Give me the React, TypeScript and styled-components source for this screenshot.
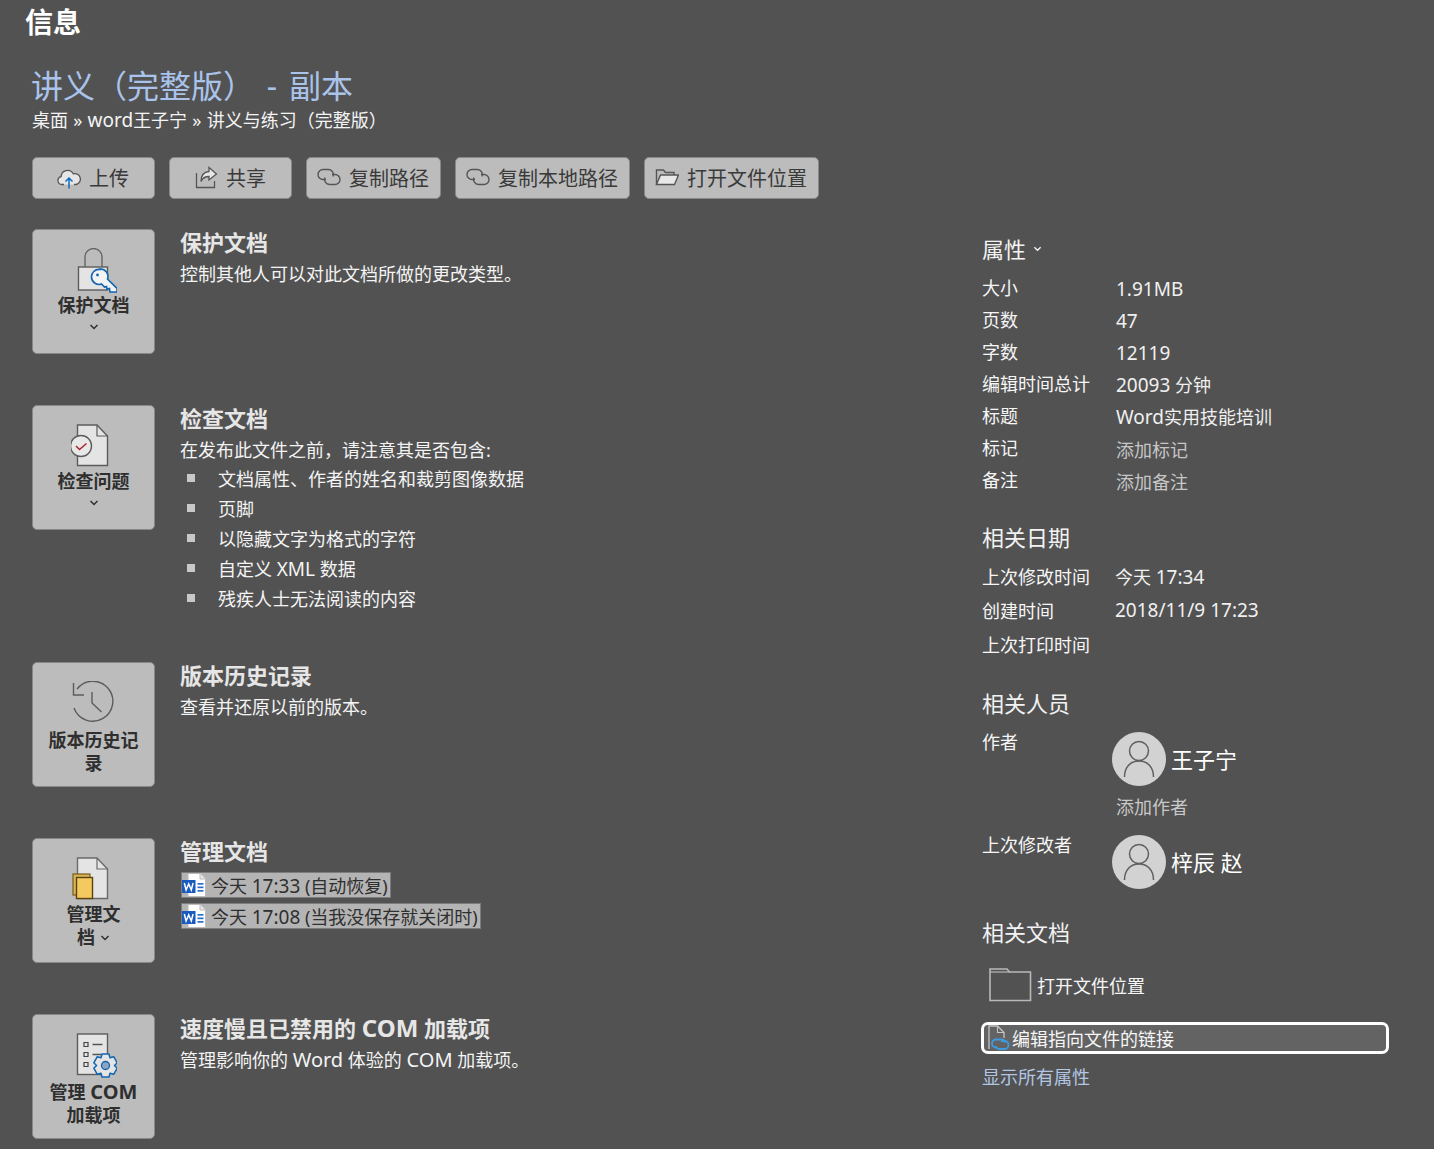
// @ts-nocheck
import React from 'react';
import styled, { createGlobalStyle } from 'styled-components';

const GlobalStyle = createGlobalStyle`
  html, body {
    margin: 0;
    padding: 0;
    background: #525252;
    font-family: "Noto Sans", "Noto Sans CJK SC", sans-serif;
  }
`;

const Page = styled.div`
  width: 1434px;
  height: 1149px;
  overflow: hidden;
  background: #525252;
  color: #fff;
`;

const PageTitle = styled.h1`
  margin: 0;
  padding: 4px 0 0 25px;
  height: 42px;
  box-sizing: border-box;
  font-size: 28px;
  line-height: 36px;
  font-weight: 700;
`;

// latin and digits run a little larger than the CJK around them
const Latin = styled.span`
  font-size: ${p => p.$size || 19}px;
`;

const FileHead = styled.div`
  padding: 22px 0 0 31px;
`;

const FileName = styled.div`
  font-size: 32px;
  line-height: 44px;
  color: #a9c3eb;
  white-space: pre;
  word-spacing: 3.5px;
`;

const Breadcrumb = styled.div`
  padding-left: 1px;
  font-size: 18px;
  line-height: 24px;
  white-space: pre;
  color: #f4f4f4;
  word-spacing: 0.5px;
`;

const Toolbar = styled.div`
  display: flex;
  gap: 14px;
  padding: 25px 0 0 32px;
`;

const ToolButton = styled.button`
  display: flex;
  align-items: center;
  gap: 8px;
  height: 42px;
  box-sizing: border-box;
  padding: 0 ${p => (p.$wide ? 25 : 11)}px 2px ${p => (p.$wide ? 24 : 10)}px;
  background: #bcbcbc;
  border: 1px solid #888;
  border-radius: 5px;
  color: #3a3a3a;
  font-family: inherit;
  font-size: 20px;
  white-space: nowrap;
`;

const Columns = styled.div`
  display: flex;
  padding: 30px 0 0 32px;
`;

const LeftColumn = styled.div`
  width: 950px;
  flex: none;
`;

const Block = styled.section`
  display: flex;
  gap: 25px;
  height: ${p => (p.$tall ? 206 : 125)}px;
  margin-bottom: 51px;
`;

const Tile = styled.div`
  width: 123px;
  height: 125px;
  flex: none;
  box-sizing: border-box;
  padding-top: 18px;
  display: flex;
  flex-direction: column;
  align-items: center;
  background: #bcbcbc;
  border: 1px solid #888;
  border-radius: 5px;
  color: #2f2f2f;
`;

const TileLabel = styled.div`
  font-size: 18px;
  line-height: 23px;
  font-weight: 700;
  text-align: center;
  width: ${p => p.$width || 96}px;
`;

const TileIcon = styled.svg`
  width: 46px;
  height: 46px;
  flex: none;
  display: block;
  margin-bottom: ${p => p.$below || 0}px;
`;

const TileChevron = styled.svg`
  display: block;
  width: 10px;
  height: 6px;
  margin-top: 7px;
`;

const InlineChevron = styled.svg`
  display: inline-block;
  width: 10px;
  height: 6px;
  margin-left: 5px;
  vertical-align: 3px;
`;

const BlockBody = styled.div`
  min-width: 0;
`;

const BlockTitle = styled.h2`
  margin: 0 0 3px;
  font-size: 22px;
  line-height: 27px;
  font-weight: 700;
  color: #e6e6e6;
`;

const BlockText = styled.p`
  margin: 0;
  font-size: 18px;
  line-height: 30px;
  color: #f4f4f4;
`;

const BulletList = styled.ul`
  list-style: none;
  margin: -2px 0 0;
  padding: 0;
`;

const BulletItem = styled.li`
  display: flex;
  align-items: center;
  height: 30px;
  font-size: 18px;
  color: #f4f4f4;
  &::before {
    content: '';
    width: 8px;
    height: 8px;
    margin: 0 23px 0 7px;
    background: #c8c8c8;
  }
`;

const Versions = styled.div`
  display: flex;
  flex-direction: column;
  align-items: flex-start;
  gap: 5px;
  padding-top: 4px;
`;

const VersionRow = styled.div`
  display: flex;
  align-items: center;
  gap: 5px;
  height: 26px;
  box-sizing: border-box;
  margin-left: 1px;
  padding-right: 2px;
  background: #b4b4b4;
  border: 1px solid #7d7d7d;
  color: #2f2f2f;
  font-size: 18px;
  white-space: pre;
`;

const RightColumn = styled.aside`
  width: 420px;
  flex: none;
`;

const SideHeading = styled.h3`
  display: flex;
  align-items: center;
  gap: 7px;
  margin: ${p => p.$top}px 0 0;
  height: 32px;
  font-size: 22px;
  line-height: 32px;
  font-weight: 400;
  color: #f2f2f2;
`;

const PropGrid = styled.dl`
  display: grid;
  grid-template-columns: ${p => p.$col}px 1fr;
  grid-auto-rows: ${p => p.$row}px;
  margin: ${p => p.$top}px 0 0;
  font-size: 18px;
  align-items: center;
`;

const PropLabel = styled.dt`
  color: #f6f6f6;
  white-space: nowrap;
`;

const PropValue = styled.dd`
  margin: ${p => p.$drop || 0}px 0 0;
  color: ${p => (p.$muted ? '#c6c6c6' : '#f0f0f0')};
  white-space: nowrap;
`;

const PersonRow = styled.div`
  display: flex;
  margin-top: ${p => p.$top}px;
`;

const PersonLabel = styled.div`
  width: 130px;
  flex: none;
  font-size: 18px;
  line-height: 20px;
  color: #f6f6f6;
`;

const Avatar = styled.div`
  width: 54px;
  height: 54px;
  border-radius: 50%;
  background: #d2d2d2;
  display: flex;
  align-items: center;
  justify-content: center;
  margin-right: 5px;
  flex: none;
`;

const PersonName = styled.div`
  font-size: 22px;
  line-height: 54px;
  color: #fff;
`;

const AddAuthor = styled.div`
  margin: 8px 0 0 134px;
  font-size: 18px;
  line-height: 26px;
  color: #c8c8c8;
`;

const FolderLink = styled.div`
  display: flex;
  align-items: center;
  gap: 5px;
  margin: 19px 0 0 7px;
  font-size: 18px;
  color: #f6f6f6;
`;

const FocusLink = styled.div`
  display: flex;
  align-items: center;
  gap: 2px;
  width: 408px;
  height: 32px;
  box-sizing: border-box;
  margin: 20px 0 0 -1px;
  padding-left: 4px;
  background: #636363;
  border: 3px solid #fff;
  border-radius: 7px;
  font-size: 18px;
  color: #f6f6f6;
`;

const ShowAll = styled.div`
  margin-top: 10px;
  font-size: 18px;
  line-height: 26px;
  color: #b3c6e4;
`;

const Cloud = () => (
  <svg width="24" height="24" viewBox="0 0 24 24" fill="none">
    <path d="M7 19.500H5a4 4 0 0 1-.9-7.900 6.500 6.500 0 0 1 12.200-2.800 5.200 5.200 0 0 1 3 10.700H17" fill="#e6e6e6" stroke="#555" strokeWidth="1.300" />
    <path d="M12 23.500V13M8.500 16.500 12 13l3.500 3.500" stroke="#0f6cbd" strokeWidth="1.500" />
  </svg>
);

const Share = () => (
  <svg width="24" height="24" viewBox="0 0 24 24" fill="none">
    <path d="M2.500 8v14.500h18V16" stroke="#555" strokeWidth="1.300" />
    <path d="M15 2.500 22.500 9 15 15v-3.500c-4 0-6.500 1.500-8 5 0-6 3-9.500 8-10z" fill="#e6e6e6" stroke="#555" strokeWidth="1.300" />
  </svg>
);

const LinkLoops = () => (
  <svg width="24" height="24" viewBox="0 0 24 24" fill="none">
    <path d="M9 14.500H6a5 5 0 0 1 0-10h5.500a5 5 0 0 1 4.500 7" stroke="#555" strokeWidth="1.400" />
    <path d="M15 9.500h3a5 5 0 0 1 0 10h-5.500a5 5 0 0 1-4.500-7" stroke="#555" strokeWidth="1.400" />
  </svg>
);

const OpenFolder = () => (
  <svg width="24" height="24" viewBox="0 0 24 24" fill="none">
    <path d="M1.500 19.500V5h7l2 2.500h8.500V10" stroke="#555" strokeWidth="1.400" fill="#bcbcbc" />
    <path d="M1.500 19.500 5.500 10h18l-4 9.500z" fill="#e8e8e8" stroke="#555" strokeWidth="1.400" />
  </svg>
);

const Chevron = ({ as: Comp = TileChevron }) => (
  <Comp viewBox="0 0 10 6" fill="none">
    <path d="M1.500 1 5 4.500 8.500 1" stroke="#2f2f2f" strokeWidth="1.500" />
  </Comp>
);

const LockIcon = () => (
  <TileIcon viewBox="0 0 46 46" fill="none">
    <path d="M14 19V9a8.500 8.500 0 0 1 17 0v10" stroke="#666" strokeWidth="1.400" />
    <rect x="7.500" y="19" width="29" height="23" fill="#e4e4e4" stroke="#5c5c5c" strokeWidth="1.400" />
    <path d="M29 21.500a7.500 7.500 0 1 0 1.500 14.500l3 3 2-.5.500 2.500 2.500-.5.500 3.500h7v-3.500l-9.500-9.500a7.500 7.500 0 0 0-7.500-10z" fill="#f3f3f3" stroke="#1265b0" strokeWidth="1.600" />
    <circle cx="26.500" cy="27" r="1.400" fill="#1265b0" />
  </TileIcon>
);

const CheckIcon = () => (
  <TileIcon viewBox="0 0 46 46" fill="none">
    <path d="M6.500 1H26l10.500 11v29.500h-30z" fill="#e4e4e4" stroke="#5c5c5c" strokeWidth="1.400" />
    <path d="M26 1v11h10.500" stroke="#5c5c5c" strokeWidth="1.200" />
    <circle cx="10" cy="22" r="10.500" fill="#e8e8e8" stroke="#5c5c5c" strokeWidth="1.400" />
    <path d="M5 22l3.500 3.500 7-6" stroke="#a8262e" strokeWidth="1.500" />
  </TileIcon>
);

const HistoryIcon = () => (
  <TileIcon viewBox="0 0 46 46" fill="none" $below={2}>
    <path d="M6 8A20 20 0 1 1 3 27" stroke="#5c5c5c" strokeWidth="1.400" />
    <path d="M2.500 2v12H13M21 11v11l9.500 9" stroke="#5c5c5c" strokeWidth="1.400" />
  </TileIcon>
);

const ManageIcon = () => (
  <TileIcon viewBox="0 0 46 46" fill="none">
    <path d="M6.500 1H26l10.500 11v29.500h-30z" fill="#e4e4e4" stroke="#6a6a6a" strokeWidth="1.400" />
    <path d="M26 1v11h10.500" stroke="#6a6a6a" strokeWidth="1.200" />
    <rect x="2" y="17" width="17" height="21" fill="#d8b45a" stroke="#7a5c16" strokeWidth="1.200" />
    <rect x="5.500" y="20.500" width="16" height="21" fill="#f4c95f" stroke="#5c4410" strokeWidth="1.400" />
  </TileIcon>
);

// gear outline, six teeth, used on the COM tile
const gearPath = (cx, cy, outer, inner) => {
  const pts = [];
  for (let i = 0; i < 6; i++) {
    const a = (i * Math.PI) / 3 - Math.PI / 2;
    [[-0.52, inner], [-0.3, outer], [0.3, outer], [0.52, inner]].forEach(([d, r]) => {
      pts.push(`${(cx + Math.cos(a + d) * r).toFixed(1)} ${(cy + Math.sin(a + d) * r).toFixed(1)}`);
    });
  }
  return `M${pts.join('L')}z`;
};

const ComIcon = () => (
  <TileIcon viewBox="0 0 46 46" fill="none" $below={1}>
    <rect x="6.500" y="1" width="30" height="40.500" fill="#e4e4e4" stroke="#5c5c5c" strokeWidth="1.400" />
    <path d="M13 9.500h4v4h-4zM13 19.500h4v4h-4zM13 29.500h4v4h-4z" stroke="#444" strokeWidth="1.200" />
    <path d="M21.500 11.500h10M21.500 21.500h9" stroke="#555" strokeWidth="1.300" />
    <path d={gearPath(34.5, 32.5, 12, 9)} fill="#e4e4e4" stroke="#1265b0" strokeWidth="1.500" strokeLinejoin="round" />
    <circle cx="34.500" cy="32.500" r="4" fill="#8aa6c2" stroke="#1265b0" strokeWidth="1.300" />
  </TileIcon>
);

const WordDoc = () => (
  <svg width="24" height="24" viewBox="0 0 24 24">
    <path d="M6 .5h12l5.500 5.500v17.500H6z" fill="#fff" stroke="#bdbdbd" strokeWidth="1" />
    <path d="M18 .5V6h5.500" fill="#e6e6e6" stroke="#bdbdbd" strokeWidth="1" />
    <rect x="15.500" y="10" width="6" height="1.700" fill="#2b6fc9" />
    <rect x="15.500" y="13.500" width="6" height="1.700" fill="#2b6fc9" />
    <rect x="15.500" y="17" width="6" height="1.700" fill="#2b6fc9" />
    <rect x="0" y="7" width="13.500" height="13" fill="#185abd" />
    <path d="M2.300 10l1.800 7 2.600-6 2.600 6 1.800-7" fill="none" stroke="#fff" strokeWidth="1.500" />
  </svg>
);

const PersonGlyph = () => (
  <svg width="32" height="44" viewBox="0 0 32 44" fill="none">
    <circle cx="16" cy="14" r="9.500" stroke="#5f5f5f" strokeWidth="1.500" />
    <path d="M1.500 40c0-10 6-16 14.500-16s14.500 6 14.500 16" stroke="#5f5f5f" strokeWidth="1.500" />
  </svg>
);

const BigFolder = () => (
  <svg width="43" height="35" viewBox="0 -2 43 35" fill="none">
    <path d="M1 31.500V0h17l2.500 3H41.500v28.500z" stroke="#b9b9b9" strokeWidth="1.600" />
    <path d="M1 3h19.500" stroke="#b9b9b9" strokeWidth="1.200" />
  </svg>
);

const LinkDoc = () => (
  <svg width="22" height="26" viewBox="0 0 22 26" fill="none">
    <path d="M1 24V1h8.500L16 7.500V13" stroke="#c4c4c4" strokeWidth="1.300" />
    <path d="M9.500 1v6.500H16" stroke="#c4c4c4" strokeWidth="1.100" />
    <path d="M9 22.500H8a4 4 0 0 1 0-8h5.500a4 4 0 0 1 3.500 3" stroke="#3d9be0" strokeWidth="1.800" />
    <path d="M13 16h3.500a4 4 0 0 1 0 8H11a4 4 0 0 1-3.500-3" stroke="#3d9be0" strokeWidth="1.800" />
  </svg>
);

const buttons = [
  { icon: <Cloud />, label: '上传', wide: true },
  { icon: <Share />, label: '共享', wide: true },
  { icon: <LinkLoops />, label: '复制路径' },
  { icon: <LinkLoops />, label: '复制本地路径' },
  { icon: <OpenFolder />, label: '打开文件位置' },
];

const bullets = ['文档属性、作者的姓名和裁剪图像数据', '页脚', '以隐藏文字为格式的字符', <>自定义 <Latin>XML</Latin> 数据</>, '残疾人士无法阅读的内容'];

const props = [
  ['大小', <Latin>1.91MB</Latin>],
  ['页数', <Latin>47</Latin>],
  ['字数', <Latin>12119</Latin>],
  ['编辑时间总计', <><Latin>20093</Latin> 分钟</>],
  ['标题', <><Latin>Word</Latin>实用技能培训</>],
  ['标记', '添加标记', true],
  ['备注', '添加备注', true],
];

const dates = [
  ['上次修改时间', <>今天 <Latin>17:34</Latin></>],
  ['创建时间', <Latin>2018/11/9 17:23</Latin>],
  ['上次打印时间', ''],
];

export default function App() {
  return (
    <Page>
      <GlobalStyle />
      <PageTitle>信息</PageTitle>
      <FileHead>
        <FileName>讲义（完整版） - 副本</FileName>
        <Breadcrumb>桌面 » <Latin>word</Latin>王子宁 » 讲义与练习（完整版）</Breadcrumb>
      </FileHead>
      <Toolbar>
        {buttons.map(b => (
          <ToolButton key={b.label} $wide={b.wide}>
            {b.icon}
            {b.label}
          </ToolButton>
        ))}
      </Toolbar>
      <Columns>
        <LeftColumn>
          <Block>
            <Tile>
              <LockIcon />
              <TileLabel>保护文档</TileLabel>
              <Chevron />
            </Tile>
            <BlockBody>
              <BlockTitle>保护文档</BlockTitle>
              <BlockText>控制其他人可以对此文档所做的更改类型。</BlockText>
            </BlockBody>
          </Block>
          <Block $tall>
            <Tile>
              <CheckIcon />
              <TileLabel>检查问题</TileLabel>
              <Chevron />
            </Tile>
            <BlockBody>
              <BlockTitle>检查文档</BlockTitle>
              <BlockText>在发布此文件之前，请注意其是否包含:</BlockText>
              <BulletList>
                {bullets.map((t, i) => (
                  <BulletItem key={i}><span>{t}</span></BulletItem>
                ))}
              </BulletList>
            </BlockBody>
          </Block>
          <Block>
            <Tile>
              <HistoryIcon />
              <TileLabel>版本历史记录</TileLabel>
            </Tile>
            <BlockBody>
              <BlockTitle>版本历史记录</BlockTitle>
              <BlockText>查看并还原以前的版本。</BlockText>
            </BlockBody>
          </Block>
          <Block>
            <Tile>
              <ManageIcon />
              <TileLabel $width={60}>
                管理文档
                <Chevron as={InlineChevron} />
              </TileLabel>
            </Tile>
            <BlockBody>
              <BlockTitle>管理文档</BlockTitle>
              <Versions>
                <VersionRow>
                  <WordDoc />
                  <span>今天 <Latin>17:33</Latin> (自动恢复)</span>
                </VersionRow>
                <VersionRow>
                  <WordDoc />
                  <span>今天 <Latin>17:08</Latin> (当我没保存就关闭时)</span>
                </VersionRow>
              </Versions>
            </BlockBody>
          </Block>
          <Block>
            <Tile>
              <ComIcon />
              <TileLabel>管理 <Latin $size={20}>COM</Latin> 加载项</TileLabel>
            </Tile>
            <BlockBody>
              <BlockTitle>速度慢且已禁用的 <Latin $size={24}>COM</Latin> 加载项</BlockTitle>
              <BlockText>管理影响你的 <Latin $size={20}>Word</Latin> 体验的 <Latin $size={20}>COM</Latin> 加载项。</BlockText>
            </BlockBody>
          </Block>
        </LeftColumn>
        <RightColumn>
          <SideHeading $top={4}>
            属性
            <svg width="9" height="6" viewBox="0 0 10 6" fill="none">
              <path d="M1.500 1 5 4.500 8.500 1" stroke="#f2f2f2" strokeWidth="1.500" />
            </svg>
          </SideHeading>
          <PropGrid $col={134} $row={32} $top={6}>
            {props.map(([k, v, muted]) => (
              <React.Fragment key={k}>
                <PropLabel>{k}</PropLabel>
                <PropValue $muted={muted} $drop={3}>{v}</PropValue>
              </React.Fragment>
            ))}
          </PropGrid>
          <SideHeading $top={26}>相关日期</SideHeading>
          <PropGrid $col={133} $row={34} $top={6}>
            {dates.map(([k, v]) => (
              <React.Fragment key={k}>
                <PropLabel>{k}</PropLabel>
                <PropValue>{v}</PropValue>
              </React.Fragment>
            ))}
          </PropGrid>
          <SideHeading $top={26}>相关人员</SideHeading>
          <PersonRow $top={13}>
            <PersonLabel>作者</PersonLabel>
            <Avatar>
              <PersonGlyph />
            </Avatar>
            <PersonName>王子宁</PersonName>
          </PersonRow>
          <AddAuthor>添加作者</AddAuthor>
          <PersonRow $top={15}>
            <PersonLabel>上次修改者</PersonLabel>
            <Avatar>
              <PersonGlyph />
            </Avatar>
            <PersonName>梓辰 赵</PersonName>
          </PersonRow>
          <SideHeading $top={27}>相关文档</SideHeading>
          <FolderLink>
            <BigFolder />
            打开文件位置
          </FolderLink>
          <FocusLink>
            <LinkDoc />
            编辑指向文件的链接
          </FocusLink>
          <ShowAll>显示所有属性</ShowAll>
        </RightColumn>
      </Columns>
    </Page>
  );
}
